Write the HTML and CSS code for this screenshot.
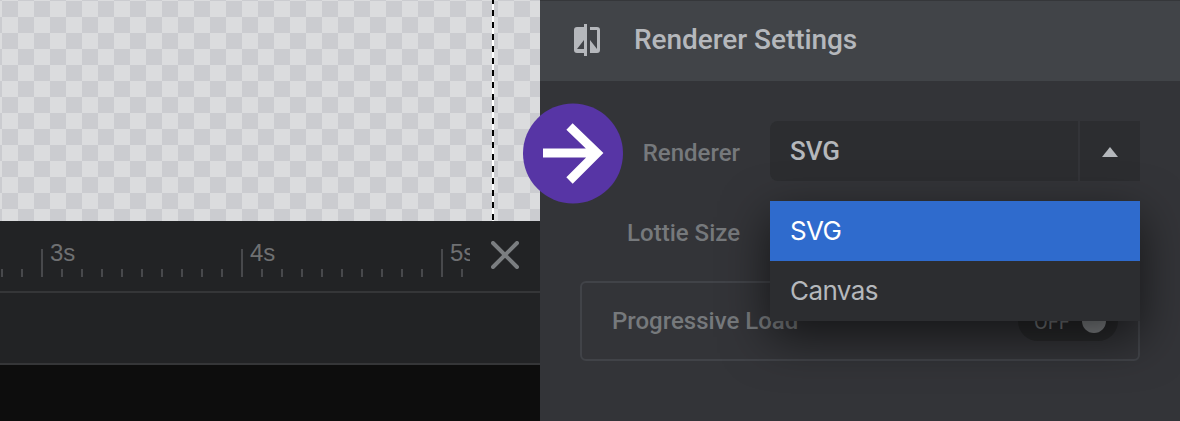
FILE: index.html
```html
<!DOCTYPE html>
<html lang="en">
<head>
    <meta charset="UTF-8">
    <meta name="viewport" content="width=device-width, initial-scale=1.0">
    <title>Renderer Settings</title>
    <link rel="stylesheet" href="styles.css">
</head>
<body>
    <!-- Canvas and timeline -->
    <div class="editor">
        <div class="stage">
            <div class="guide"></div>
        </div>
        <div class="ruler">
            <div class="ticks">
                <div class="second lead"></div>
                <div class="second"><span>3s</span></div>
                <div class="second"><span>4s</span></div>
                <div class="second"><span>5s</span></div>
            </div>
            <svg class="close" width="28" height="28" viewBox="0 0 28 28">
                <path d="M2 2L26 26M26 2L2 26"/>
            </svg>
        </div>
        <div class="track"></div>
        <div class="bottom"></div>
    </div>

    <!-- Settings panel -->
    <div class="panel">
        <div class="header">
            <svg class="header-icon" width="26" height="32" viewBox="0 0 26 32">
                <path fill-rule="evenodd" d="M10 0H13V32H10V29H3Q0 29 0 26V6Q0 3 3 3H10ZM10 16L3 25H10Z"/>
                <path d="M16 3H23Q26 3 26 6V26Q26 29 23 29H16V16L23 25V6H16Z"/>
            </svg>
            <h3>Renderer Settings</h3>
        </div>

        <div class="settings">
            <div class="row">
                <label>Renderer</label>
                <div class="select">
                    <div class="value">SVG</div>
                    <div class="toggle">
                        <svg width="16" height="10" viewBox="0 0 16 10"><path d="M8 0L16 10H0Z"/></svg>
                    </div>
                    <ul class="menu">
                        <li class="active">SVG</li>
                        <li>Canvas</li>
                    </ul>
                </div>
            </div>
            <div class="row">
                <label>Lottie Size</label>
            </div>
            <div class="box">
                <label>Progressive Load</label>
                <div class="switch"><span>OFF</span><i></i></div>
            </div>
        </div>

        <!-- Pointer over the Renderer row -->
        <svg class="pointer" width="100" height="101" viewBox="0 0 100 101">
            <circle cx="50" cy="50.5" r="50"/>
            <path d="M20 50H75M46.500 23.500L74 50L46.500 77.500"/>
        </svg>
    </div>
</body>
</html>
```

FILE: styles.css
```css
/* Global Styling */
* {
    box-sizing: border-box;
}
body {
    margin: 0;
    display: flex;
    width: 1180px;
    height: 421px;
    overflow: hidden;
    font-family: Roboto, sans-serif;
    font-size: 24px;
    color: #b5b8bc;
    background: #333438;
}

/* Editor */
.editor {
    width: 540px;
    display: flex;
    flex-direction: column;
    background: #222325;
}
.stage {
    height: 221px;
    padding-left: 492px;
    background: repeating-conic-gradient(#dbdcde 0 25%, #cbccd0 0 50%) 2px 1px / 32px 32px;
}
.guide {
    width: 2px;
    height: 100%;
    background: repeating-linear-gradient(#000 0 6px, #fff 6px 12px) 0 -2px / 2px 12px;
}
.ruler {
    height: 72px;
    display: flex;
    border-bottom: 2px solid #353638;
}
.ticks {
    width: 470px;
    height: 56px;
    display: flex;
    overflow: hidden;
}
.second {
    flex: 0 0 200px;
    padding: 18px 0 0 9px;
    font-family: "Liberation Sans", Arial, sans-serif;
    line-height: 28px;
    color: #6f7072;
    background:
        linear-gradient(#48494c, #48494c) 0 28px / 2px 28px no-repeat,
        linear-gradient(90deg, #48494c 2px, transparent 2px) 0 48px / 20px 8px repeat-x;
}
.second.lead {
    flex-basis: 41px;
    padding: 0;
    background: linear-gradient(90deg, #48494c 2px, transparent 2px) 1px 48px / 20px 8px repeat-x;
}
.close {
    margin: 20px 0 0 21px;
    fill: none;
    stroke: #7b7e81;
    stroke-width: 4;
    stroke-linecap: round;
}
.track {
    height: 72px;
    border-bottom: 2px solid #353638;
}
.bottom {
    flex: 1;
    background: #0d0d0d;
}

/* Panel */
.panel {
    position: relative;
    width: 640px;
    background: #333438;
}
.header {
    height: 81px;
    display: flex;
    align-items: center;
    padding-left: 34px;
    border-top: 1px solid #35373a;
    background: #414448;
}
.header-icon {
    margin-top: -2px;
    fill: #b5b8bc;
}
h3 {
    margin: -4px 0 0 34px;
    font-size: 28px;
    font-weight: 500;
    letter-spacing: -0.05px;
}
.settings {
    padding: 40px 40px 0;
}
.row {
    height: 60px;
    display: flex;
    align-items: center;
    margin-bottom: 20px;
}
label {
    font-weight: 500;
    color: #76797c;
}
.row label {
    width: 160px;
    padding-top: 3px;
    text-align: right;
}

/* Select */
.select {
    position: relative;
    width: 370px;
    height: 60px;
    margin-left: 30px;
    display: flex;
    gap: 2px;
}
.value {
    flex: 1;
    padding-left: 20px;
    border-radius: 8px 0 0 8px;
    font-size: 26px;
    font-weight: 500;
    line-height: 60px;
    background: #2c2d30;
}
.toggle {
    width: 60px;
    display: flex;
    align-items: center;
    justify-content: center;
    padding-top: 2px;
    background: #2c2d30;
}
.toggle svg {
    fill: #b5b8bc;
}
.menu {
    position: absolute;
    top: 80px;
    left: 0;
    z-index: 1;
    width: 370px;
    margin: 0;
    padding: 0;
    list-style: none;
    font-family: Inter, sans-serif;
    font-size: 26px;
    letter-spacing: -0.6px;
    line-height: 59px;
    background: #2c2d30;
    box-shadow: 0 16px 48px rgba(0, 0, 0, 0.6);
}
.menu li {
    height: 60px;
    padding-left: 20px;
}
.menu .active {
    color: #fff;
    background: #2f6bcd;
}

/* Progressive load */
.box {
    height: 80px;
    display: flex;
    align-items: center;
    justify-content: space-between;
    padding: 0 20px 0 30px;
    border: 2px solid #414348;
    border-radius: 6px;
}
.switch {
    width: 100px;
    height: 40px;
    display: flex;
    align-items: center;
    justify-content: space-between;
    padding: 0 12px 0 16px;
    border-radius: 20px;
    font-size: 20px;
    color: #76797c;
    background: #292a2c;
}
.switch span {
    padding-top: 2px;
}
.switch i {
    width: 24px;
    height: 24px;
    border-radius: 50%;
    background: #85888b;
}

/* Pointer */
.pointer {
    position: absolute;
    top: 103px;
    left: -17px;
    fill: #5735a5;
}
.pointer path {
    fill: none;
    stroke: #fff;
    stroke-width: 9;
}
```
